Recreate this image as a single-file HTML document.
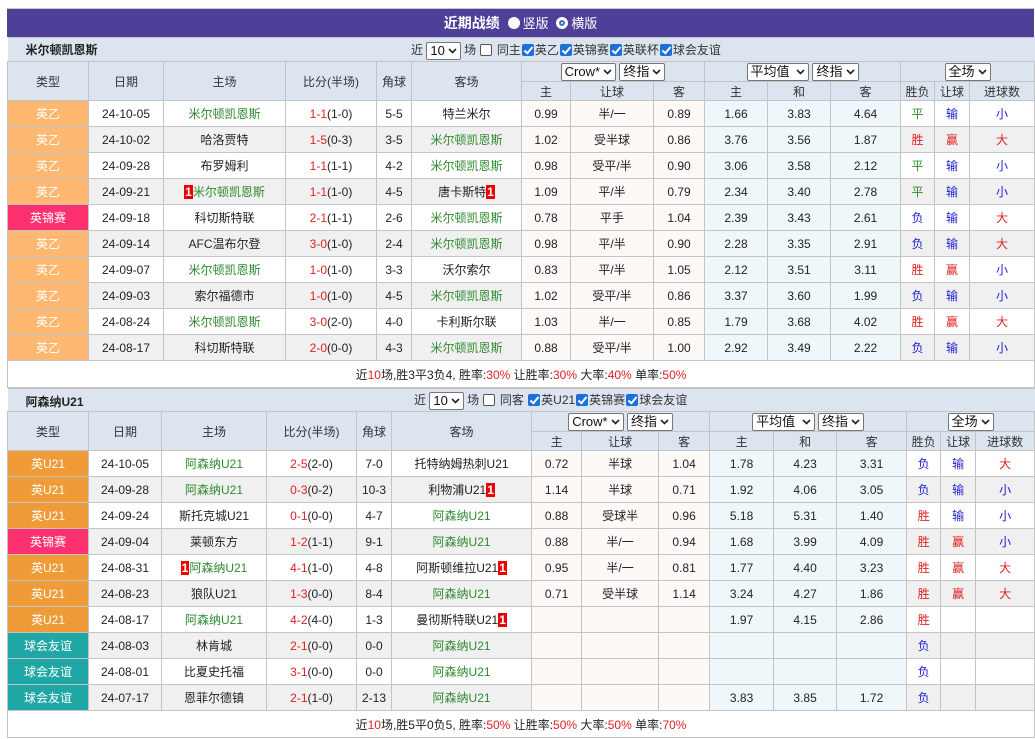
<!DOCTYPE html>
<html><head><meta charset="utf-8">
<style>
*{box-sizing:border-box;margin:0;padding:0}
body{width:1035px;height:739px;overflow:hidden;background:#fff;font-family:"Liberation Sans","Noto Sans CJK SC",sans-serif;font-size:12px;color:#222;position:relative}
.top{position:absolute;left:7px;top:0;width:1027px;height:9px;border-bottom:1px solid #c8c8c8}
.bar{position:absolute;left:7px;top:9px;width:1027px;height:28px;background:#4f3f99;color:#fff;font-weight:bold;font-size:14px;text-align:center;line-height:28px}
.bar span{font-weight:normal;font-size:13px}
.rad{display:inline-block;width:12px;height:12px;border-radius:50%;background:#fff;vertical-align:-1px;margin:0 3px 0 4px}
.rad.on{border:3px solid #fff;background:#fff;box-shadow:inset 0 0 0 2px #2a6fd6}
table{position:absolute;left:7px;border-collapse:collapse;table-layout:fixed;width:1027px}
td{border:1px solid #c4c4c4;text-align:center;white-space:nowrap;overflow:hidden;padding:0}
.ttl td{background:#dce5ef;height:24px;border-left:none;border-right:none}
.ttl .n{font-weight:bold;text-align:left;padding-left:18px}
.hd td{background:#dce5ef;color:#333}
.hd1 td{height:20px}
.hd2 td{height:19px}
tr.r td{height:26px;background:#fff}
tr.g td{background:#f0f0f0}
tr.r td.c{background:#fdf9f7}
tr.r td.a{background:#f0f7fb}
.t1{background:#ffb871!important;color:#fff}
.t2{background:#fe3170!important;color:#fff}
.t3{background:#ef9b38!important;color:#fff}
.t4{background:#1ea7a5!important;color:#fff}
.gr{color:#2f8a2f}
.rd{color:#e02020}
.bl{color:#2020d0}
.box{background:#e00;color:#fff;font-weight:bold;padding:0 1px}
.sum td{height:27px;background:#fff}
.sel{display:inline-block;height:18px;line-height:16px;border:1px solid #777;border-radius:2px;background:#fff;padding:0 3px;font-size:13px;color:#111;vertical-align:middle}
.sel svg{vertical-align:1px;margin-left:3px}
.cb{display:inline-block;width:12px;height:12px;vertical-align:-2px;border:1px solid #555;border-radius:2px;background:#fff;margin:0 1px}
.cb.on{background:#1e6fd9;border-color:#1e6fd9;position:relative}
.cb.on:after{content:"";position:absolute;left:3px;top:0px;width:3px;height:7px;border:solid #fff;border-width:0 2px 2px 0;transform:rotate(40deg)}
.ctl{position:absolute;font-size:12px;color:#333}
</style></head><body>
<div class="top"></div>
<div class="bar">近期战绩 <span><i class="rad"></i>竖版 <i class="rad on"></i>横版</span></div>

<table style="top:37px">
<colgroup><col style="width:81px"><col style="width:75px"><col style="width:122px"><col style="width:91px"><col style="width:35px"><col style="width:110px"><col style="width:49px"><col style="width:83px"><col style="width:51px"><col style="width:63px"><col style="width:63px"><col style="width:70px"><col style="width:34px"><col style="width:35px"><col style="width:65px"></colgroup>
<tr class="ttl"><td colspan="6" class="n">米尔顿凯恩斯</td><td colspan="9"></td></tr>
<tr class="hd hd1"><td rowspan="2">类型</td><td rowspan="2">日期</td><td rowspan="2">主场</td><td rowspan="2">比分(半场)</td><td rowspan="2">角球</td><td rowspan="2">客场</td>
<td colspan="3"><span class="sel">Crow*<svg width="9" height="6"><path d="M1 1l3.5 3.5L8 1" stroke="#222" stroke-width="1.6" fill="none"/></svg></span> <span class="sel">终指<svg width="9" height="6"><path d="M1 1l3.5 3.5L8 1" stroke="#222" stroke-width="1.6" fill="none"/></svg></span></td>
<td colspan="3"><span class="sel">平均值 <svg width="9" height="6"><path d="M1 1l3.5 3.5L8 1" stroke="#222" stroke-width="1.6" fill="none"/></svg></span> <span class="sel">终指<svg width="9" height="6"><path d="M1 1l3.5 3.5L8 1" stroke="#222" stroke-width="1.6" fill="none"/></svg></span></td>
<td colspan="3"><span class="sel">全场<svg width="9" height="6"><path d="M1 1l3.5 3.5L8 1" stroke="#222" stroke-width="1.6" fill="none"/></svg></span></td></tr>
<tr class="hd hd2"><td>主</td><td>让球</td><td>客</td><td>主</td><td>和</td><td>客</td><td>胜负</td><td>让球</td><td>进球数</td></tr>
<tr class="r"><td class="t1">英乙</td><td>24-10-05</td><td class="gr">米尔顿凯恩斯</td><td><span class="rd">1-1</span>(1-0)</td><td>5-5</td><td>特兰米尔</td><td class="c">0.99</td><td class="c">半/一</td><td class="c">0.89</td><td class="a">1.66</td><td class="a">3.83</td><td class="a">4.64</td><td class="gr">平</td><td class="bl">输</td><td class="bl">小</td></tr>
<tr class="r g"><td class="t1">英乙</td><td>24-10-02</td><td>哈洛贾特</td><td><span class="rd">1-5</span>(0-3)</td><td>3-5</td><td class="gr">米尔顿凯恩斯</td><td class="c">1.02</td><td class="c">受半球</td><td class="c">0.86</td><td class="a">3.76</td><td class="a">3.56</td><td class="a">1.87</td><td class="rd">胜</td><td class="rd">赢</td><td class="rd">大</td></tr>
<tr class="r"><td class="t1">英乙</td><td>24-09-28</td><td>布罗姆利</td><td><span class="rd">1-1</span>(1-1)</td><td>4-2</td><td class="gr">米尔顿凯恩斯</td><td class="c">0.98</td><td class="c">受平/半</td><td class="c">0.90</td><td class="a">3.06</td><td class="a">3.58</td><td class="a">2.12</td><td class="gr">平</td><td class="bl">输</td><td class="bl">小</td></tr>
<tr class="r g"><td class="t1">英乙</td><td>24-09-21</td><td class="gr"><span class="box">1</span>米尔顿凯恩斯</td><td><span class="rd">1-1</span>(1-0)</td><td>4-5</td><td>唐卡斯特<span class="box">1</span></td><td class="c">1.09</td><td class="c">平/半</td><td class="c">0.79</td><td class="a">2.34</td><td class="a">3.40</td><td class="a">2.78</td><td class="gr">平</td><td class="bl">输</td><td class="bl">小</td></tr>
<tr class="r"><td class="t2">英锦赛</td><td>24-09-18</td><td>科切斯特联</td><td><span class="rd">2-1</span>(1-1)</td><td>2-6</td><td class="gr">米尔顿凯恩斯</td><td class="c">0.78</td><td class="c">平手</td><td class="c">1.04</td><td class="a">2.39</td><td class="a">3.43</td><td class="a">2.61</td><td class="bl">负</td><td class="bl">输</td><td class="rd">大</td></tr>
<tr class="r g"><td class="t1">英乙</td><td>24-09-14</td><td>AFC温布尔登</td><td><span class="rd">3-0</span>(1-0)</td><td>2-4</td><td class="gr">米尔顿凯恩斯</td><td class="c">0.98</td><td class="c">平/半</td><td class="c">0.90</td><td class="a">2.28</td><td class="a">3.35</td><td class="a">2.91</td><td class="bl">负</td><td class="bl">输</td><td class="rd">大</td></tr>
<tr class="r"><td class="t1">英乙</td><td>24-09-07</td><td class="gr">米尔顿凯恩斯</td><td><span class="rd">1-0</span>(1-0)</td><td>3-3</td><td>沃尔索尔</td><td class="c">0.83</td><td class="c">平/半</td><td class="c">1.05</td><td class="a">2.12</td><td class="a">3.51</td><td class="a">3.11</td><td class="rd">胜</td><td class="rd">赢</td><td class="bl">小</td></tr>
<tr class="r g"><td class="t1">英乙</td><td>24-09-03</td><td>索尔福德市</td><td><span class="rd">1-0</span>(1-0)</td><td>4-5</td><td class="gr">米尔顿凯恩斯</td><td class="c">1.02</td><td class="c">受平/半</td><td class="c">0.86</td><td class="a">3.37</td><td class="a">3.60</td><td class="a">1.99</td><td class="bl">负</td><td class="bl">输</td><td class="bl">小</td></tr>
<tr class="r"><td class="t1">英乙</td><td>24-08-24</td><td class="gr">米尔顿凯恩斯</td><td><span class="rd">3-0</span>(2-0)</td><td>4-0</td><td>卡利斯尔联</td><td class="c">1.03</td><td class="c">半/一</td><td class="c">0.85</td><td class="a">1.79</td><td class="a">3.68</td><td class="a">4.02</td><td class="rd">胜</td><td class="rd">赢</td><td class="rd">大</td></tr>
<tr class="r g"><td class="t1">英乙</td><td>24-08-17</td><td>科切斯特联</td><td><span class="rd">2-0</span>(0-0)</td><td>4-3</td><td class="gr">米尔顿凯恩斯</td><td class="c">0.88</td><td class="c">受平/半</td><td class="c">1.00</td><td class="a">2.92</td><td class="a">3.49</td><td class="a">2.22</td><td class="bl">负</td><td class="bl">输</td><td class="bl">小</td></tr>
<tr class="sum"><td colspan="15">近<span class="rd">10</span>场,胜3平3负4, 胜率:<span class="rd">30%</span> 让胜率:<span class="rd">30%</span> 大率:<span class="rd">40%</span> 单率:<span class="rd">50%</span></td></tr>
</table>
<div class="ctl" style="left:411px;top:41px">近 <span class="sel">10<svg width="9" height="6"><path d="M1 1l3.5 3.5L8 1" stroke="#222" stroke-width="1.6" fill="none"/></svg></span> 场 <i class="cb"></i> 同主<i class="cb on"></i>英乙<i class="cb on"></i>英锦赛<i class="cb on"></i>英联杯<i class="cb on"></i>球会友谊</div>

<table style="top:388px">
<colgroup><col style="width:81px"><col style="width:73px"><col style="width:105px"><col style="width:90px"><col style="width:35px"><col style="width:140px"><col style="width:50px"><col style="width:77px"><col style="width:51px"><col style="width:64px"><col style="width:63px"><col style="width:70px"><col style="width:34px"><col style="width:35px"><col style="width:59px"></colgroup>
<tr class="ttl"><td colspan="6" class="n" style="height:23px;padding-top:2px">阿森纳U21</td><td colspan="9" style="height:23px"></td></tr>
<tr class="hd hd1"><td rowspan="2">类型</td><td rowspan="2">日期</td><td rowspan="2">主场</td><td rowspan="2">比分(半场)</td><td rowspan="2">角球</td><td rowspan="2">客场</td>
<td colspan="3"><span class="sel">Crow*<svg width="9" height="6"><path d="M1 1l3.5 3.5L8 1" stroke="#222" stroke-width="1.6" fill="none"/></svg></span> <span class="sel">终指<svg width="9" height="6"><path d="M1 1l3.5 3.5L8 1" stroke="#222" stroke-width="1.6" fill="none"/></svg></span></td>
<td colspan="3"><span class="sel">平均值 <svg width="9" height="6"><path d="M1 1l3.5 3.5L8 1" stroke="#222" stroke-width="1.6" fill="none"/></svg></span> <span class="sel">终指<svg width="9" height="6"><path d="M1 1l3.5 3.5L8 1" stroke="#222" stroke-width="1.6" fill="none"/></svg></span></td>
<td colspan="3"><span class="sel">全场<svg width="9" height="6"><path d="M1 1l3.5 3.5L8 1" stroke="#222" stroke-width="1.6" fill="none"/></svg></span></td></tr>
<tr class="hd hd2"><td>主</td><td>让球</td><td>客</td><td>主</td><td>和</td><td>客</td><td>胜负</td><td>让球</td><td>进球数</td></tr>
<tr class="r"><td class="t3">英U21</td><td>24-10-05</td><td class="gr">阿森纳U21</td><td><span class="rd">2-5</span>(2-0)</td><td>7-0</td><td>托特纳姆热刺U21</td><td class="c">0.72</td><td class="c">半球</td><td class="c">1.04</td><td class="a">1.78</td><td class="a">4.23</td><td class="a">3.31</td><td class="bl">负</td><td class="bl">输</td><td class="rd">大</td></tr>
<tr class="r g"><td class="t3">英U21</td><td>24-09-28</td><td class="gr">阿森纳U21</td><td><span class="rd">0-3</span>(0-2)</td><td>10-3</td><td>利物浦U21<span class="box">1</span></td><td class="c">1.14</td><td class="c">半球</td><td class="c">0.71</td><td class="a">1.92</td><td class="a">4.06</td><td class="a">3.05</td><td class="bl">负</td><td class="bl">输</td><td class="bl">小</td></tr>
<tr class="r"><td class="t3">英U21</td><td>24-09-24</td><td>斯托克城U21</td><td><span class="rd">0-1</span>(0-0)</td><td>4-7</td><td class="gr">阿森纳U21</td><td class="c">0.88</td><td class="c">受球半</td><td class="c">0.96</td><td class="a">5.18</td><td class="a">5.31</td><td class="a">1.40</td><td class="rd">胜</td><td class="bl">输</td><td class="bl">小</td></tr>
<tr class="r g"><td class="t2">英锦赛</td><td>24-09-04</td><td>莱顿东方</td><td><span class="rd">1-2</span>(1-1)</td><td>9-1</td><td class="gr">阿森纳U21</td><td class="c">0.88</td><td class="c">半/一</td><td class="c">0.94</td><td class="a">1.68</td><td class="a">3.99</td><td class="a">4.09</td><td class="rd">胜</td><td class="rd">赢</td><td class="bl">小</td></tr>
<tr class="r"><td class="t3">英U21</td><td>24-08-31</td><td class="gr"><span class="box">1</span>阿森纳U21</td><td><span class="rd">4-1</span>(1-0)</td><td>4-8</td><td>阿斯顿维拉U21<span class="box">1</span></td><td class="c">0.95</td><td class="c">半/一</td><td class="c">0.81</td><td class="a">1.77</td><td class="a">4.40</td><td class="a">3.23</td><td class="rd">胜</td><td class="rd">赢</td><td class="rd">大</td></tr>
<tr class="r g"><td class="t3">英U21</td><td>24-08-23</td><td>狼队U21</td><td><span class="rd">1-3</span>(0-0)</td><td>8-4</td><td class="gr">阿森纳U21</td><td class="c">0.71</td><td class="c">受半球</td><td class="c">1.14</td><td class="a">3.24</td><td class="a">4.27</td><td class="a">1.86</td><td class="rd">胜</td><td class="rd">赢</td><td class="rd">大</td></tr>
<tr class="r"><td class="t3">英U21</td><td>24-08-17</td><td class="gr">阿森纳U21</td><td><span class="rd">4-2</span>(4-0)</td><td>1-3</td><td>曼彻斯特联U21<span class="box">1</span></td><td class="c"></td><td class="c"></td><td class="c"></td><td class="a">1.97</td><td class="a">4.15</td><td class="a">2.86</td><td class="rd">胜</td><td></td><td></td></tr>
<tr class="r g"><td class="t4">球会友谊</td><td>24-08-03</td><td>林肯城</td><td><span class="rd">2-1</span>(0-0)</td><td>0-0</td><td class="gr">阿森纳U21</td><td class="c"></td><td class="c"></td><td class="c"></td><td class="a"></td><td class="a"></td><td class="a"></td><td class="bl">负</td><td></td><td></td></tr>
<tr class="r"><td class="t4">球会友谊</td><td>24-08-01</td><td>比夏史托福</td><td><span class="rd">3-1</span>(0-0)</td><td>0-0</td><td class="gr">阿森纳U21</td><td class="c"></td><td class="c"></td><td class="c"></td><td class="a"></td><td class="a"></td><td class="a"></td><td class="bl">负</td><td></td><td></td></tr>
<tr class="r g"><td class="t4">球会友谊</td><td>24-07-17</td><td>恩菲尔德镇</td><td><span class="rd">2-1</span>(1-0)</td><td>2-13</td><td class="gr">阿森纳U21</td><td class="c"></td><td class="c"></td><td class="c"></td><td class="a">3.83</td><td class="a">3.85</td><td class="a">1.72</td><td class="bl">负</td><td></td><td></td></tr>
<tr class="sum"><td colspan="15">近<span class="rd">10</span>场,胜5平0负5, 胜率:<span class="rd">50%</span> 让胜率:<span class="rd">50%</span> 大率:<span class="rd">50%</span> 单率:<span class="rd">70%</span></td></tr>
</table>
<div class="ctl" style="left:414px;top:391px">近 <span class="sel">10<svg width="9" height="6"><path d="M1 1l3.5 3.5L8 1" stroke="#222" stroke-width="1.6" fill="none"/></svg></span> 场 <i class="cb"></i> 同客 <i class="cb on"></i>英U21<i class="cb on"></i>英锦赛<i class="cb on"></i>球会友谊</div>
</body></html>
